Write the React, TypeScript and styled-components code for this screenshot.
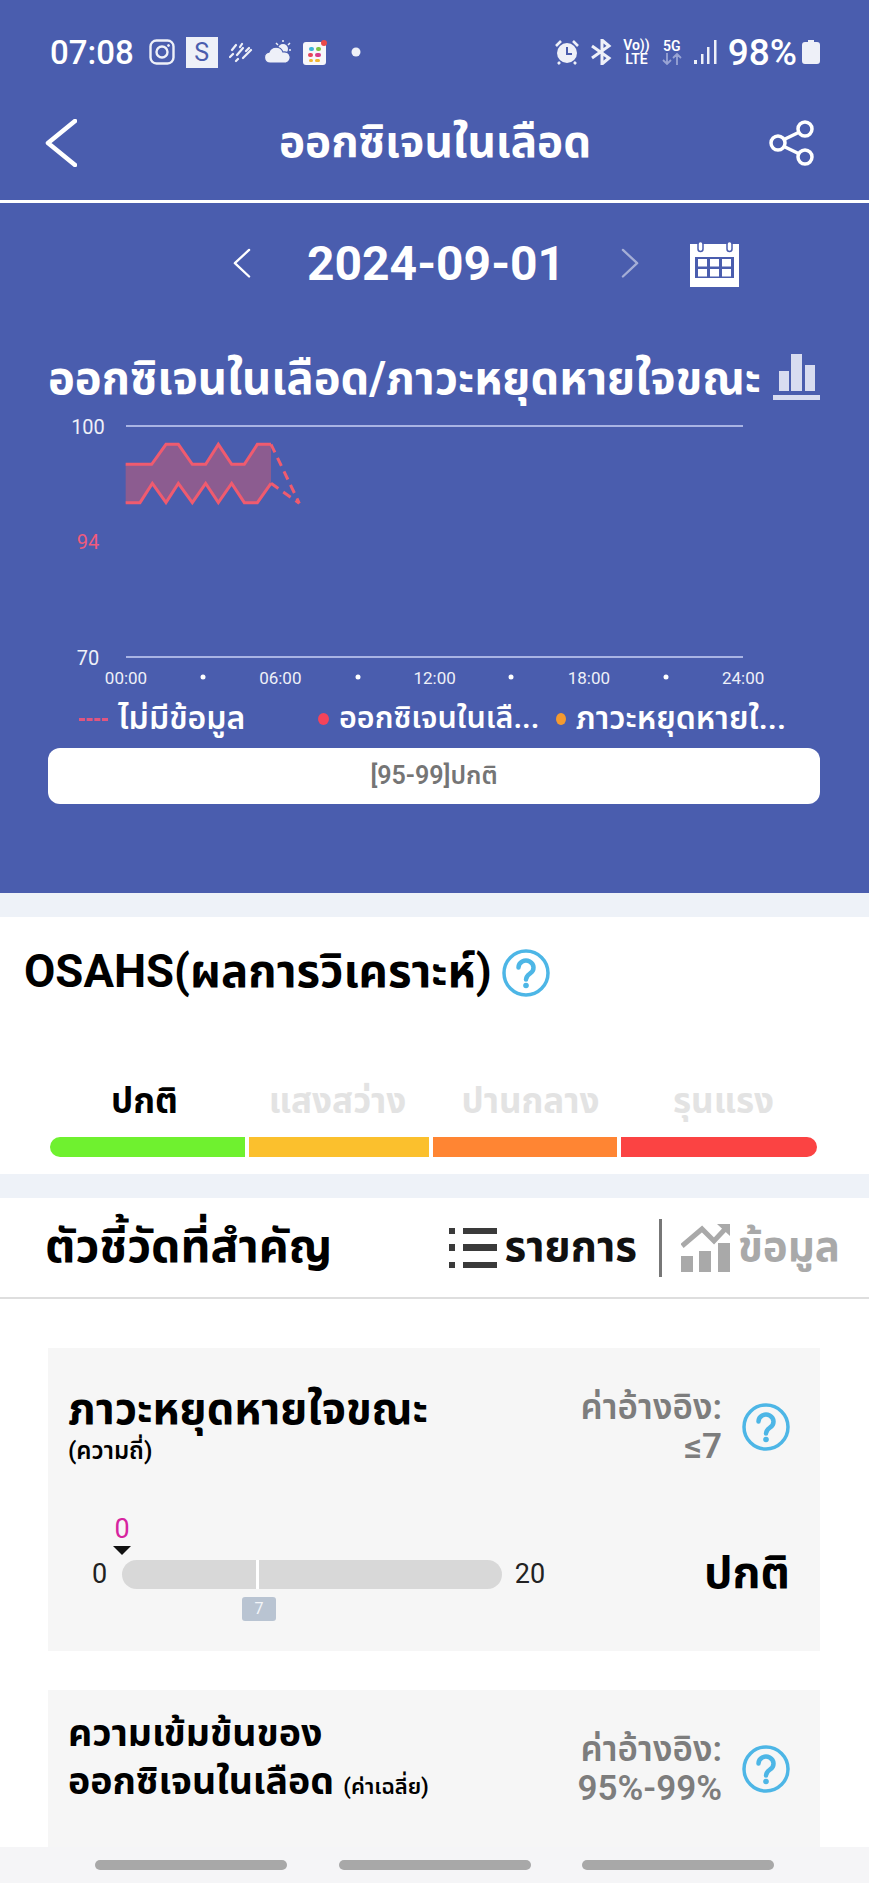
import React from 'react'
import styled, { createGlobalStyle } from 'styled-components'

const Global = createGlobalStyle`
  html, body { margin: 0; padding: 0; background: #fff; }
  * { box-sizing: border-box; }
`

const FONT = `Roboto, "Noto Sans", "Noto Sans Thai", "Liberation Sans", sans-serif`

const Page = styled.div`
  position: relative;
  width: 869px;
  height: 1883px;
  overflow: hidden;
  background: #fff;
  font-family: ${FONT};
  color: #000;
`

const BluePanel = styled.section`
  height: 893px;
  background: #4a5dae;
  color: #fff;
`

const StatusBar = styled.div`
  height: 104px;
  padding: 0 49px 0 50px;
  display: flex;
  align-items: center;
  justify-content: space-between;
`

const StatusGroup = styled.div`
  display: flex;
  align-items: center;
  gap: 11px;
`

const Clock = styled.span`
  font-size: 33px;
  font-weight: 500;
  margin-right: 4px;
`

const Battery = styled.span`
  font-size: 37px;
  font-weight: 500;
  margin-right: -6px;
`

const SBox = styled.span`
  width: 32px;
  height: 31px;
  background: #eef0f8;
  color: #4a5dae;
  font-size: 25px;
  font-weight: 400;
  display: flex;
  align-items: center;
  justify-content: center;
`

const TinyStack = styled.span`
  display: flex;
  flex-direction: column;
  align-items: center;
  font-size: 14px;
  font-weight: 600;
  line-height: 14px;
`

const NavBar = styled.div`
  height: 78px;
  margin-bottom: 18px;
  padding: 0 54px 0 45px;
  display: grid;
  grid-template-columns: 1fr auto 1fr;
  align-items: center;
`

const NavTitle = styled.h1`
  margin: 0 0 0 10px;
  font-size: 44px;
  font-weight: 700;
`

const ShareIcon = styled.svg`
  justify-self: end;
`

const Divider = styled.div`
  height: 3px;
  background: #fff;
`

const DateRow = styled.div`
  height: 121px;
  padding-left: 232px;
  display: flex;
  align-items: center;
  gap: 56px;
`

const DateText = styled.div`
  width: 258px;
  text-align: center;
  font-size: 48px;
  font-weight: 700;
  white-space: nowrap;
`

const CalendarIcon = styled.svg`
  margin-left: -6px;
`

const ChartTitleRow = styled.div`
  margin-top: 22px;
  height: 62px;
  padding: 0 49px 0 48px;
  display: flex;
  align-items: center;
  justify-content: space-between;
`

const ChartTitle = styled.h2`
  margin: 6px 0 0;
  font-size: 45.300px;
  font-weight: 700;
  white-space: nowrap;
`

const ChartBox = styled.svg`
  display: block;
  width: 869px;
  height: 292px;
`

const Legend = styled.div`
  height: 38px;
  padding-left: 79px;
  display: flex;
  align-items: center;
`

const LegendItem = styled.div<{ $width: number; $size?: number }>`
  width: ${p => p.$width}px;
  display: flex;
  align-items: center;
  gap: 10px;
  font-size: ${p => p.$size ?? 32}px;
  font-weight: 600;
  white-space: nowrap;
`

const LegendDash = styled.span`
  width: 29px;
  border-top: 3px dashed #e0557f;
`

const LegendDot = styled.span<{ $color: string }>`
  width: 11px;
  height: 12px;
  border-radius: 50%;
  background: ${p => p.$color};
`

const RangeBox = styled.div`
  margin: 10px 49px 0 48px;
  height: 56px;
  border-radius: 12px;
  background: #fff;
  color: #757575;
  font-size: 25px;
  font-weight: 600;
  display: flex;
  align-items: center;
  justify-content: center;
`

const Band = styled.div`
  height: 24px;
  background: #eef2f8;
`

const OsahsSection = styled.section`
  height: 257px;
  padding-top: 32px;
`

const OsahsHead = styled.div`
  height: 48px;
  padding-left: 24px;
  display: flex;
  align-items: center;
  gap: 10px;
`

const OsahsTitle = styled.h2`
  margin: 0;
  font-size: 45.500px;
  font-weight: 700;
  white-space: nowrap;
`

const Levels = styled.div`
  margin: 85px 49px 0 48px;
  height: 40px;
  display: grid;
  grid-template-columns: repeat(4, 1fr);
`

const Level = styled.div<{ $active?: boolean }>`
  text-align: center;
  font-size: 35px;
  line-height: 40px;
  font-weight: 700;
  color: ${p => (p.$active ? '#000' : '#e3e3e3')};
`

const LevelBar = styled.div`
  margin: 15px 52px 0 50px;
  height: 20px;
  display: flex;
  gap: 4px;
  border-radius: 10px;
  overflow: hidden;
`

const LevelSegment = styled.div<{ $color: string; $width: number }>`
  width: ${p => p.$width}px;
  background: ${p => p.$color};
`

const IndicatorHead = styled.div`
  height: 101px;
  padding: 0 29px 0 45px;
  border-bottom: 2px solid #dedede;
  display: flex;
  align-items: center;
  justify-content: space-between;
`

const IndicatorTitle = styled.h2`
  margin: 0;
  font-size: 46.500px;
  font-weight: 700;
  white-space: nowrap;
`

const Tabs = styled.div`
  display: flex;
  align-items: center;
  gap: 8px;
`

const Tab = styled.span<{ $muted?: boolean }>`
  font-size: 42px;
  font-weight: 700;
  color: ${p => (p.$muted ? '#a9a9a9' : '#111')};
`

const TabRule = styled.span`
  width: 3px;
  height: 58px;
  margin: 0 11px 0 14px;
  background: #777;
`

const CardList = styled.div`
  padding: 49px 49px 0 48px;
  display: flex;
  flex-direction: column;
  gap: 39px;
`

const Card = styled.article`
  height: 303px;
  flex: none;
  padding: 32px 30px 0 20px;
  background: #f6f6f6;
`

const CardTop = styled.div`
  height: 94px;
  display: flex;
  align-items: center;
`

const CardTitleBlock = styled.div<{ $lift: number }>`
  flex: 1;
  margin-top: ${p => -p.$lift}px;
`

const CardTitle = styled.div<{ $size: number }>`
  font-size: ${p => p.$size}px;
  line-height: 48px;
  font-weight: 700;
  white-space: nowrap;
`

const CardSub = styled.span<{ $block?: boolean }>`
  display: ${p => (p.$block ? 'block' : 'inline')};
  font-size: ${p => (p.$block ? 24 : 22)}px;
  line-height: 34px;
  font-weight: 600;
`

const RefValue = styled.div`
  margin-right: 20px;
  text-align: right;
  color: #7d7d7d;
  font-size: 35px;
  line-height: 39px;
  font-weight: 600;
`

const ScaleRow = styled.div`
  margin-top: 66px;
  display: flex;
  align-items: center;
  font-size: 27px;
  color: #222;
`

const ScaleMin = styled.span`
  width: 54px;
  padding-left: 24px;
`

const ScaleMax = styled.span`
  width: 56px;
  text-align: center;
`

const Track = styled.div`
  position: relative;
  width: 380px;
  height: 29px;
  border-radius: 15px;
  background: #d8d8d8;
`

const TrackTick = styled.span`
  position: absolute;
  top: 0;
  bottom: 0;
  left: 134px;
  width: 3px;
  background: #fff;
`

const MarkerValue = styled.span`
  position: absolute;
  left: -12px;
  top: -47px;
  width: 24px;
  text-align: center;
  color: #d6249f;
  font-size: 27px;
  line-height: 32px;
`

const MarkerArrow = styled.span`
  position: absolute;
  left: -9px;
  top: -14px;
  border-left: 9px solid transparent;
  border-right: 9px solid transparent;
  border-top: 9px solid #111;
`

const TickBadge = styled.span`
  position: absolute;
  left: 120px;
  top: 37px;
  width: 34px;
  height: 24px;
  border-radius: 3px;
  background: #b9c4d2;
  color: #f4f6f9;
  font-size: 16px;
  line-height: 24px;
  text-align: center;
`

const ScaleResult = styled.span`
  margin-left: auto;
  font-size: 45px;
  font-weight: 700;
  color: #000;
`

const BottomBar = styled.nav`
  position: absolute;
  left: 0;
  right: 0;
  bottom: 0;
  height: 36px;
  padding: 13px 95px 0;
  background: #f5f5f7;
  display: flex;
  justify-content: space-between;
`

const BottomPill = styled.span`
  width: 192px;
  height: 10px;
  border-radius: 5px;
  background: #a8a8a8;
`

const Help = () => (
  <svg width="48" height="48" viewBox="0 0 48 48" fill="none">
    <circle cx="24" cy="24" r="22" stroke="#4db6e6" strokeWidth="3.500" />
    <path d="M16.500 18.500a7.500 7 0 1 1 11.500 6c-2.500 1.800-4 3-4 6" stroke="#4db6e6" strokeWidth="4.500" strokeLinecap="round" />
    <circle cx="24" cy="36.500" r="2.800" fill="#4db6e6" />
  </svg>
)

const Chevron = ({ dir, size, faded }: { dir: 'left' | 'right'; size: number; faded?: boolean }) => (
  <svg width={size} height={size * 1.6} viewBox="0 0 20 32" fill="none" opacity={faded ? 0.5 : 1}>
    <path d={dir === 'left' ? 'M18 2 3 16l15 14' : 'M2 2l15 14L2 30'} stroke="#fff" strokeWidth={2.400} strokeLinecap="round" strokeLinejoin="round" />
  </svg>
)

const toChart = (pts: number[][]) => pts.map(([x, y]) => `${60 + x / 3},${2 + y / 3}`).join(' ')

const upper = [[197, 163], [275, 163], [318, 103], [355, 103], [397, 163], [437, 163], [475, 103], [515, 163], [553, 163], [592, 103], [633, 103]]
const lower = [[197, 278], [240, 278], [277, 220], [318, 278], [355, 220], [397, 278], [437, 220], [475, 278], [515, 220], [553, 278], [592, 278], [633, 220]]

const Chart = () => (
  <ChartBox viewBox="0 0 869 292">
    <line x1="126" y1="18" x2="743" y2="18" stroke="#a9b4e4" strokeWidth="2" />
    <line x1="126" y1="249" x2="743" y2="249" stroke="#a9b4e4" strokeWidth="2" />
    <polygon points={`${toChart(upper)} ${toChart([...lower].reverse())}`} fill="#8c5c90" />
    <polyline points={toChart(upper)} fill="none" stroke="#ef5b6f" strokeWidth="3" />
    <polyline points={toChart(lower)} fill="none" stroke="#ef5b6f" strokeWidth="3" />
    <polyline points={toChart([[633, 103], [718, 280]])} fill="none" stroke="#ef5b6f" strokeWidth="3" strokeDasharray="9 6" />
    <polyline points={toChart([[633, 220], [718, 280]])} fill="none" stroke="#ef5b6f" strokeWidth="3" strokeDasharray="9 6" />
    <g fontFamily={FONT} fontSize="20" textAnchor="middle" fill="#eef0f8">
      <text x="88" y="26">100</text>
      <text x="88" y="141" fill="#ef5b7d">94</text>
      <text x="88" y="257">70</text>
      {['00:00', '06:00', '12:00', '18:00', '24:00'].map((t, i) => (
        <text key={t} x={126 + i * 154.300} y="276" fontSize="17">{t}</text>
      ))}
    </g>
    {[203, 358, 511, 666].map(x => (
      <circle key={x} cx={x} cy="269" r="2.500" fill="#fff" />
    ))}
  </ChartBox>
)

export default function App() {
  return (
    <Page>
      <Global />
      <BluePanel>
        <StatusBar>
          <StatusGroup>
            <Clock>07:08</Clock>
            <svg width="26" height="26" viewBox="0 0 26 26" fill="none" stroke="#eef0f8" strokeWidth="2.400">
              <rect x="1.500" y="1.500" width="23" height="23" rx="6" />
              <circle cx="13" cy="13" r="5.500" />
              <circle cx="19.500" cy="6.500" r="1" fill="#eef0f8" strokeWidth="1" />
            </svg>
            <SBox>S</SBox>
            <svg width="24" height="22" viewBox="0 0 24 22" stroke="#eef0f8" strokeWidth="2.200" strokeLinecap="round">
              <path d="M3 9l4-5M11 6l2-3M1 16l3-3M8 14l6-7M17 10l3-3M7 20l2-2M14 17l8-8" />
            </svg>
            <svg width="28" height="24" viewBox="0 0 28 24" fill="#eef0f8">
              <circle cx="19" cy="9" r="5" />
              <path d="M19 0v2M26 3l-2 2M12 3l2 2M27 10h-2" stroke="#eef0f8" strokeWidth="1.500" />
              <path d="M6 23a5.500 5.500 0 0 1-1-10.900A7.500 7.500 0 0 1 19 12a5.500 5.500 0 0 1 3 11z" stroke="#4a5dae" strokeWidth="1.200" />
            </svg>
            <svg width="24" height="25" viewBox="0 0 24 25">
              <rect y="2" width="23" height="23" rx="3" fill="#f7f7fa" />
              <rect x="6" y="7" width="5" height="4" rx="2" fill="#3bb3d6" />
              <rect x="13" y="7" width="5" height="4" rx="2" fill="#7cc242" />
              <rect x="5" y="13" width="5" height="4" rx="2" fill="#e8455a" />
              <rect x="12" y="13" width="6" height="4" rx="2" fill="#d83c8a" />
              <rect x="6" y="19" width="4" height="3" rx="1.500" fill="#f2b632" />
              <rect x="12" y="19" width="5" height="3" rx="1.500" fill="#f2b632" />
              <circle cx="21" cy="3" r="3" fill="#ea4a4a" />
            </svg>
            <svg width="10" height="10" viewBox="0 0 10 10" style={{ marginLeft: 13 }}>
              <circle cx="5" cy="5" r="4.500" fill="#eef0f8" />
            </svg>
          </StatusGroup>
          <StatusGroup>
            <svg width="24" height="26" viewBox="0 0 24 26">
              <circle cx="12" cy="14" r="10" fill="#eef0f8" />
              <path d="M12 8v7h5" fill="none" stroke="#4a5dae" strokeWidth="2" />
              <path d="M1 7l5-5M23 7l-5-5M5 23l-2 2M19 23l2 2" stroke="#eef0f8" strokeWidth="2.600" />
            </svg>
            <svg width="22" height="26" viewBox="0 0 22 26" fill="none" stroke="#eef0f8" strokeWidth="3">
              <path d="M2 7l17 12-7 6V1l7 6L2 19" />
            </svg>
            <TinyStack>
              <span>Vo))</span>
              <span>LTE</span>
            </TinyStack>
            <TinyStack>
              <span>5G</span>
              <svg width="22" height="12" viewBox="0 0 22 12" fill="none" stroke="#99a4d4" strokeWidth="1.800">
                <path d="M6 0v11M2 7l4 4 4-4M16 12V1M12 5l4-4 4 4" />
              </svg>
            </TinyStack>
            <svg width="23" height="24" viewBox="0 0 23 24" fill="#eef0f8">
              <rect x="0" y="20" width="3" height="4" />
              <rect x="7" y="14" width="2.500" height="10" />
              <rect x="13" y="7" width="2.500" height="17" />
              <rect x="20" y="0" width="2.500" height="24" />
            </svg>
            <Battery>98%</Battery>
            <svg width="18" height="24" viewBox="0 0 18 24" fill="#eef0f8">
              <path d="M6 0h6v2h3a3 3 0 0 1 3 3v16a3 3 0 0 1-3 3H3a3 3 0 0 1-3-3V5a3 3 0 0 1 3-3h3z" />
            </svg>
          </StatusGroup>
        </StatusBar>

        <NavBar>
          <svg width="32" height="48" viewBox="0 0 32 48" fill="none">
            <path d="M30 2 3 24l27 22" stroke="#fff" strokeWidth="4.500" strokeLinecap="round" strokeLinejoin="round" />
          </svg>
          <NavTitle>ออกซิเจนในเลือด</NavTitle>
          <ShareIcon width="46" height="46" viewBox="0 0 46 46" fill="none" stroke="#fff" strokeWidth="3.500">
            <circle cx="36" cy="9" r="7" />
            <circle cx="9" cy="23" r="7" />
            <circle cx="36" cy="37" r="7" />
            <path d="M15 19.500 29.500 12.500M15 26.500l14.500 7" />
          </ShareIcon>
        </NavBar>
        <Divider />

        <DateRow>
          <Chevron dir="left" size={19} />
          <DateText>2024-09-01</DateText>
          <Chevron dir="right" size={19} faded />
          <CalendarIcon width="49" height="47" viewBox="0 0 49 47">
            <path d="M0 4h49v43H0z" fill="#fff" />
            <rect x="5" y="17" width="39" height="21" fill="#4a5dae" />
            {[8, 20, 32].map(x => (
              <g key={x}>
                <rect x={x} y="19" width="9" height="7.500" fill="#fff" />
                <rect x={x} y="29" width="9" height="7.500" fill="#fff" />
              </g>
            ))}
            <rect x="8" y="1.500" width="5" height="10" rx="2.500" fill="#fff" stroke="#4a5dae" strokeWidth="1.500" />
            <rect x="37" y="1.500" width="5" height="10" rx="2.500" fill="#fff" stroke="#4a5dae" strokeWidth="1.500" />
          </CalendarIcon>
        </DateRow>

        <ChartTitleRow>
          <ChartTitle>ออกซิเจนในเลือด/ภาวะหยุดหายใจขณะ</ChartTitle>
          <svg width="47" height="46" viewBox="0 0 47 46" fill="#d8dcf0">
            <rect x="6" y="17" width="10" height="20" />
            <rect x="18" y="0" width="11" height="37" />
            <rect x="32" y="11" width="10" height="26" />
            <rect x="0" y="41" width="47" height="5" />
          </svg>
        </ChartTitleRow>

        <Chart />

        <Legend>
          <LegendItem $width={239}>
            <LegendDash />
            <span>ไม่มีข้อมูล</span>
          </LegendItem>
          <LegendItem $width={238} $size={30.500}>
            <LegendDot $color="#f5435a" />
            <span>ออกซิเจนในเลื...</span>
          </LegendItem>
          <LegendItem $width={230}>
            <LegendDot $color="#f59a2e" />
            <span>ภาวะหยุดหายใ...</span>
          </LegendItem>
        </Legend>

        <RangeBox>[95-99]ปกติ</RangeBox>
      </BluePanel>

      <Band />

      <OsahsSection>
        <OsahsHead>
          <OsahsTitle>OSAHS(ผลการวิเคราะห์)</OsahsTitle>
          <Help />
        </OsahsHead>
        <Levels>
          <Level $active>ปกติ</Level>
          <Level>แสงสว่าง</Level>
          <Level>ปานกลาง</Level>
          <Level>รุนแรง</Level>
        </Levels>
        <LevelBar>
          <LevelSegment $color="#6ff12f" $width={195} />
          <LevelSegment $color="#fbc02d" $width={180} />
          <LevelSegment $color="#ff8533" $width={184} />
          <LevelSegment $color="#fb4343" $width={196} />
        </LevelBar>
      </OsahsSection>

      <Band />

      <IndicatorHead>
        <IndicatorTitle>ตัวชี้วัดที่สำคัญ</IndicatorTitle>
        <Tabs>
          <svg width="48" height="40" viewBox="0 0 48 40" fill="#3a3a3a">
            <rect x="0" y="0" width="6" height="6" />
            <rect x="14" y="0" width="34" height="6" />
            <rect x="0" y="16" width="6" height="7" />
            <rect x="14" y="16" width="34" height="7" />
            <rect x="0" y="34" width="6" height="6" />
            <rect x="14" y="34" width="34" height="6" />
          </svg>
          <Tab>รายการ</Tab>
          <TabRule />
          <svg width="49" height="48" viewBox="0 0 49 48" fill="#a9a9a9">
            <rect x="0" y="32" width="12" height="16" />
            <rect x="18" y="27" width="12" height="21" />
            <rect x="37" y="19" width="12" height="29" />
            <path d="M1 22 21 5l12 12L46 3" fill="none" stroke="#a9a9a9" strokeWidth="5" />
            <path d="M36 0h13v12z" />
          </svg>
          <Tab $muted>ข้อมูล</Tab>
        </Tabs>
      </IndicatorHead>

      <CardList>
        <Card>
          <CardTop>
            <CardTitleBlock $lift={0}>
              <CardTitle $size={43.500}>ภาวะหยุดหายใจขณะ</CardTitle>
              <CardSub $block>(ความถี่)</CardSub>
            </CardTitleBlock>
            <RefValue>
              ค่าอ้างอิง:
              <br />
              ≤7
            </RefValue>
            <Help />
          </CardTop>
          <ScaleRow>
            <ScaleMin>0</ScaleMin>
            <Track>
              <MarkerValue>0</MarkerValue>
              <MarkerArrow />
              <TrackTick />
              <TickBadge>7</TickBadge>
            </Track>
            <ScaleMax>20</ScaleMax>
            <ScaleResult>ปกติ</ScaleResult>
          </ScaleRow>
        </Card>
        <Card>
          <CardTop>
            <CardTitleBlock $lift={24}>
              <CardTitle $size={37.500}>ความเข้มข้นของ</CardTitle>
              <CardTitle $size={37.500}>
                ออกซิเจนในเลือด <CardSub>(ค่าเฉลี่ย)</CardSub>
              </CardTitle>
            </CardTitleBlock>
            <RefValue>
              ค่าอ้างอิง:
              <br />
              95%-99%
            </RefValue>
            <Help />
          </CardTop>
        </Card>
      </CardList>

      <BottomBar>
        <BottomPill />
        <BottomPill />
        <BottomPill />
      </BottomBar>
    </Page>
  )
}
